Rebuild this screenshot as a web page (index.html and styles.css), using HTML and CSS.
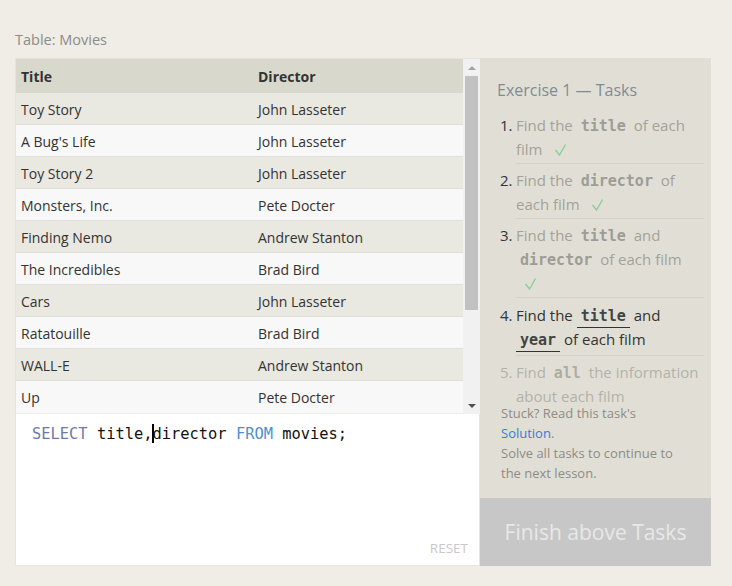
FILE: index.html
```html
<!DOCTYPE html>
<html>
<head>
<meta charset="utf-8">
<link rel="stylesheet" href="styles.css">
</head>
<body>
<div class="page">
  <div class="caption">Table: Movies</div>
  <div class="main">
    <div class="left">
      <div class="table-wrap">
        <div class="table-area">
          <div class="row head"><div class="c1">Title</div><div class="c2">Director</div></div>
          <div class="row odd"><div class="c1">Toy Story</div><div class="c2">John Lasseter</div></div>
          <div class="row even"><div class="c1">A Bug's Life</div><div class="c2">John Lasseter</div></div>
          <div class="row odd"><div class="c1">Toy Story 2</div><div class="c2">John Lasseter</div></div>
          <div class="row even"><div class="c1">Monsters, Inc.</div><div class="c2">Pete Docter</div></div>
          <div class="row odd"><div class="c1">Finding Nemo</div><div class="c2">Andrew Stanton</div></div>
          <div class="row even"><div class="c1">The Incredibles</div><div class="c2">Brad Bird</div></div>
          <div class="row odd"><div class="c1">Cars</div><div class="c2">John Lasseter</div></div>
          <div class="row even"><div class="c1">Ratatouille</div><div class="c2">Brad Bird</div></div>
          <div class="row odd"><div class="c1">WALL-E</div><div class="c2">Andrew Stanton</div></div>
          <div class="row even last"><div class="c1">Up</div><div class="c2">Pete Docter</div></div>
        </div>
        <div class="scrollbar">
          <div class="arrow up"></div>
          <div class="track"><div class="thumb"></div></div>
          <div class="arrow down"></div>
        </div>
      </div>
      <div class="editor">
        <div class="code"><span class="kw1">SELECT</span> title,<span class="cursor"></span>director <span class="kw2">FROM</span> movies;</div>
        <div class="reset">RESET</div>
      </div>
    </div>
    <div class="panel">
      <div class="tasks">
        <div class="heading">Exercise 1 — Tasks</div>
        <ol class="list">
          <li class="done"><span class="num">1.</span><span class="txt">Find the <code>title</code> of each film <svg class="check" width="11" height="12" viewBox="0 0 11 12"><polyline points="0.5,6 4.5,11 10.5,0.5" fill="none" stroke="#86cf95" stroke-width="1.3"/></svg></span></li>
          <li class="done"><span class="num">2.</span><span class="txt">Find the <code>director</code> of each film <svg class="check" width="11" height="12" viewBox="0 0 11 12"><polyline points="0.5,6 4.5,11 10.5,0.5" fill="none" stroke="#86cf95" stroke-width="1.3"/></svg></span></li>
          <li class="done"><span class="num">3.</span><span class="txt">Find the <code>title</code> and <code>director</code> of each film <svg class="check" width="11" height="12" viewBox="0 0 11 12"><polyline points="0.5,6 4.5,11 10.5,0.5" fill="none" stroke="#86cf95" stroke-width="1.3"/></svg></span></li>
          <li class="current"><span class="num">4.</span><span class="txt">Find the <code>title</code> and <code>year</code> of each film</span></li>
          <li class="todo"><span class="num">5.</span><span class="txt">Find <code>all</code> the information about each film</span></li>
        </ol>
        <div class="stuck">Stuck? Read this task's<br><a class="sol">Solution</a>.<br>Solve all tasks to continue to the next lesson.</div>
      </div>
      <div class="finish">Finish above Tasks</div>
    </div>
  </div>
</div>
</body>
</html>
```

FILE: styles.css
```css
html, body {
  margin: 0;
  padding: 0;
  background: #efede6;
}
body {
  font-family: "Open Sans", "Noto Sans", sans-serif;
  color: #333;
}
.page {
  padding: 29px 21px 0 15px;
}
.caption {
  font-size: 14.5px;
  color: #8b8b8b;
  line-height: 22px;
  height: 22px;
  margin-bottom: 7px;
}
.main {
  display: flex;
  width: 696px;
  height: 508px;
}
.left {
  width: 465px;
  display: flex;
  flex-direction: column;
}
.table-wrap {
  height: 356px;
  box-sizing: border-box;
  border: 1px solid #e4e3dc;
  border-bottom: none;
  border-right: none;
  display: flex;
}
.table-area {
  width: 447px;
}
.row {
  display: flex;
  height: 32px;
  align-items: center;
  font-size: 14px;
  box-sizing: border-box;
  border-bottom: 1px solid #e0dfd9;
  padding-top: 1px;
}
.row.head {
  height: 34px;
  background: #d9d8cd;
  font-weight: bold;
  border-bottom: none;
}
.row.odd { background: #e9e8e1; }
.row.even { background: #f8f8f8; }
.row.last { border-bottom: none; }
.c1 {
  width: 237px;
  padding-left: 5px;
}
.c2 {
  flex: 1;
}
.scrollbar {
  width: 17px;
  background: #f1f1f1;
  display: flex;
  flex-direction: column;
}
.arrow {
  height: 17px;
  display: flex;
  align-items: center;
  justify-content: center;
}
.arrow.up::before {
  content: "";
  border-left: 4px solid transparent;
  border-right: 4px solid transparent;
  border-bottom: 4px solid #a3a3a3;
}
.arrow.down::before {
  content: "";
  border-left: 4px solid transparent;
  border-right: 4px solid transparent;
  border-top: 4px solid #505050;
}
.track {
  flex: 1;
  padding: 0 2px;
}
.thumb {
  height: 234px;
  background: #c1c1c1;
}
.editor {
  flex: 1;
  background: #fff;
  border: 1px solid #e6e5df;
  border-top: none;
  box-sizing: border-box;
  position: relative;
}
.code {
  font-family: "DejaVu Sans Mono", "Liberation Mono", monospace;
  font-size: 15.4px;
  color: #111;
  padding: 10px 0 0 16px;
  line-height: 20px;
}
.kw1 { color: #6e7aa8; }
.kw2 { color: #4f8fd0; }
.cursor {
  display: inline-block;
  width: 2px;
  height: 19px;
  background: #000;
  vertical-align: -4px;
  margin-right: -2px;
}
.reset {
  position: absolute;
  right: 11px;
  bottom: 8px;
  font-size: 13.5px;
  color: #c9c9c9;
}
.panel {
  width: 231px;
  display: flex;
  flex-direction: column;
  background: #e1dfd5;
}
.tasks {
  flex: 1;
  padding: 20px 7px 0 17px;
}
.heading {
  font-size: 16px;
  color: #7f8c96;
  line-height: 24px;
  margin-bottom: 11px;
}
.list {
  list-style: none;
  margin: 0;
  padding: 0 0 0 3px;
}
.list li {
  display: flex;
  font-size: 15px;
  line-height: 24px;
}
.list li .txt {
  flex: 1;
  border-bottom: 1px solid #d4d2c8;
  padding: 4px 0 2px;
}
.list li:first-child .txt { padding-top: 0; }
.list li:first-child .num { padding-top: 0; }
.list li.current .txt { padding-top: 5px; padding-bottom: 4px; }
.list li.current .num { padding-top: 5px; }
.list li.todo .txt { border-bottom: none; padding-bottom: 0; }
.num {
  width: 16px;
  color: #2e3440;
  padding-top: 4px;
}
.done .txt { color: #a3a29b; }
.todo .num, .todo .txt { color: #b3b2aa; }
.current .txt { color: #333; }
code {
  font-family: "DejaVu Sans Mono", "Liberation Mono", monospace;
  font-weight: bold;
  font-size: 15px;
  line-height: 16px;
  padding: 0 4px;
}
.done code { color: #9d9c95; }
.todo code { color: #aeada5; }
.current code {
  color: #444;
  border-bottom: 1px solid #333;
  padding-bottom: 2px;
}
.check {
  margin-left: 9px;
  vertical-align: -1px;
}
.stuck {
  margin-top: -5px;
  font-size: 13px;
  line-height: 20px;
  color: #8d8c86;
  margin-left: 4px;
  width: 182px;
}
.sol { color: #2f7ddf; }
.finish {
  height: 68px;
  background: #c7c7c7;
  color: #e8e8e6;
  font-size: 21px;
  display: flex;
  align-items: center;
  justify-content: center;
}
```
